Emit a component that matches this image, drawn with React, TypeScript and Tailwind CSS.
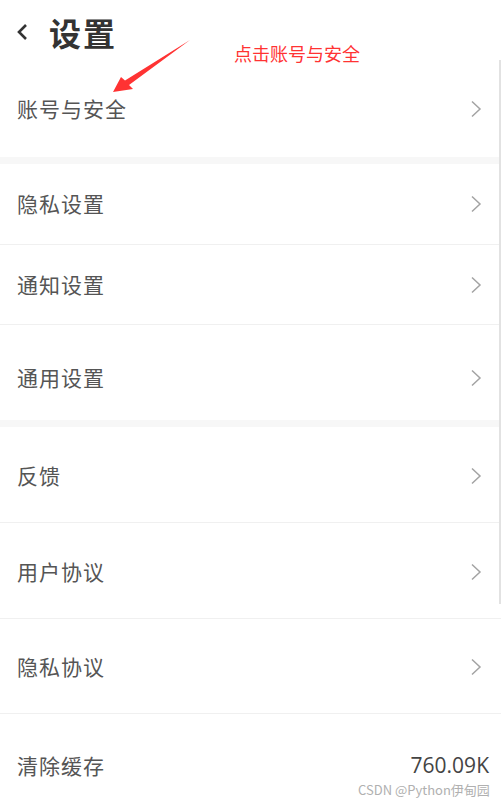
import React from "react";

const font = { fontFamily: '"Noto Sans CJK SC", "Noto Sans", sans-serif' };

function Chevron() {
  return (
    <svg width="12" height="18" viewBox="0 0 12 18" className="shrink-0">
      <path d="M2 1.5 L10 9 L2 16.5" fill="none" stroke="#a3a3a3" strokeWidth="1.5" />
    </svg>
  );
}

function Row({
  label,
  h,
  border = true,
  shift = "",
  right,
}: {
  label: string;
  h: string;
  border?: boolean;
  shift?: string;
  right?: React.ReactNode;
}) {
  return (
    <div className={`flex items-center justify-between pl-[17px] pr-[19px] ${h} ${shift} ${border ? "border-b border-[#f0f0f0]" : ""}`}>
      <span className="text-[21px] text-[#555] tracking-[1px]">{label}</span>
      {right ?? <Chevron />}
    </div>
  );
}

export default function App() {
  return (
    <div className="relative w-[501px] h-[808px] overflow-hidden bg-white" style={font}>
      {/* header */}
      <div className="flex items-center h-[63px] pl-[14px]">
        <svg width="16" height="20" viewBox="0 0 16 20">
          <path d="M12 3 L5 10 L12 17" fill="none" stroke="#333" strokeWidth="2.6" />
        </svg>
        <span className="ml-[19px] text-[32px] font-bold text-[#333] tracking-[2px]">设置</span>
      </div>

      <Row label="账号与安全" h="h-[94px]" border={false} shift="pb-[2px]" />
      <div className="h-[7px] bg-[#f7f7f7]" />
      <Row label="隐私设置" h="h-[81px]" />
      <Row label="通知设置" h="h-[80px]" />
      <Row label="通用设置" h="h-[95px]" border={false} shift="pt-[10px]" />
      <div className="h-[7px] bg-[#f7f7f7]" />
      <Row label="反馈" h="h-[96px]" shift="pt-[2px]" />
      <Row label="用户协议" h="h-[96px]" shift="pt-[2px]" />
      <Row label="隐私协议" h="h-[95px]" shift="pt-[2px]" />
      <Row
        label="清除缓存"
        h="h-[100px]"
        border={false}
        shift="pt-[4px]"
        right={<span className="text-[21px] text-[#444] -mr-[7px]" style={{ fontFamily: '"Open Sans", sans-serif' }}>760.09K</span>}
      />

      {/* scrollbar */}
      <div className="absolute right-0 top-[60px] w-[2px] h-[544px] bg-[#e2e2e2]" />

      {/* annotation */}
      <span className="absolute left-[234px] top-[40px] text-[18px] text-[#f33]">点击账号与安全</span>
      <svg className="absolute left-0 top-0" width="501" height="120" viewBox="0 0 501 120">
        <polygon points="113,92 121,77 125,80.5 190,40 129,85 133,89" fill="#f33" />
      </svg>

      {/* watermark */}
      <span className="absolute left-[358px] top-[780px] text-[13px] text-[#b0b0b0]">CSDN @Python伊甸园</span>
    </div>
  );
}
